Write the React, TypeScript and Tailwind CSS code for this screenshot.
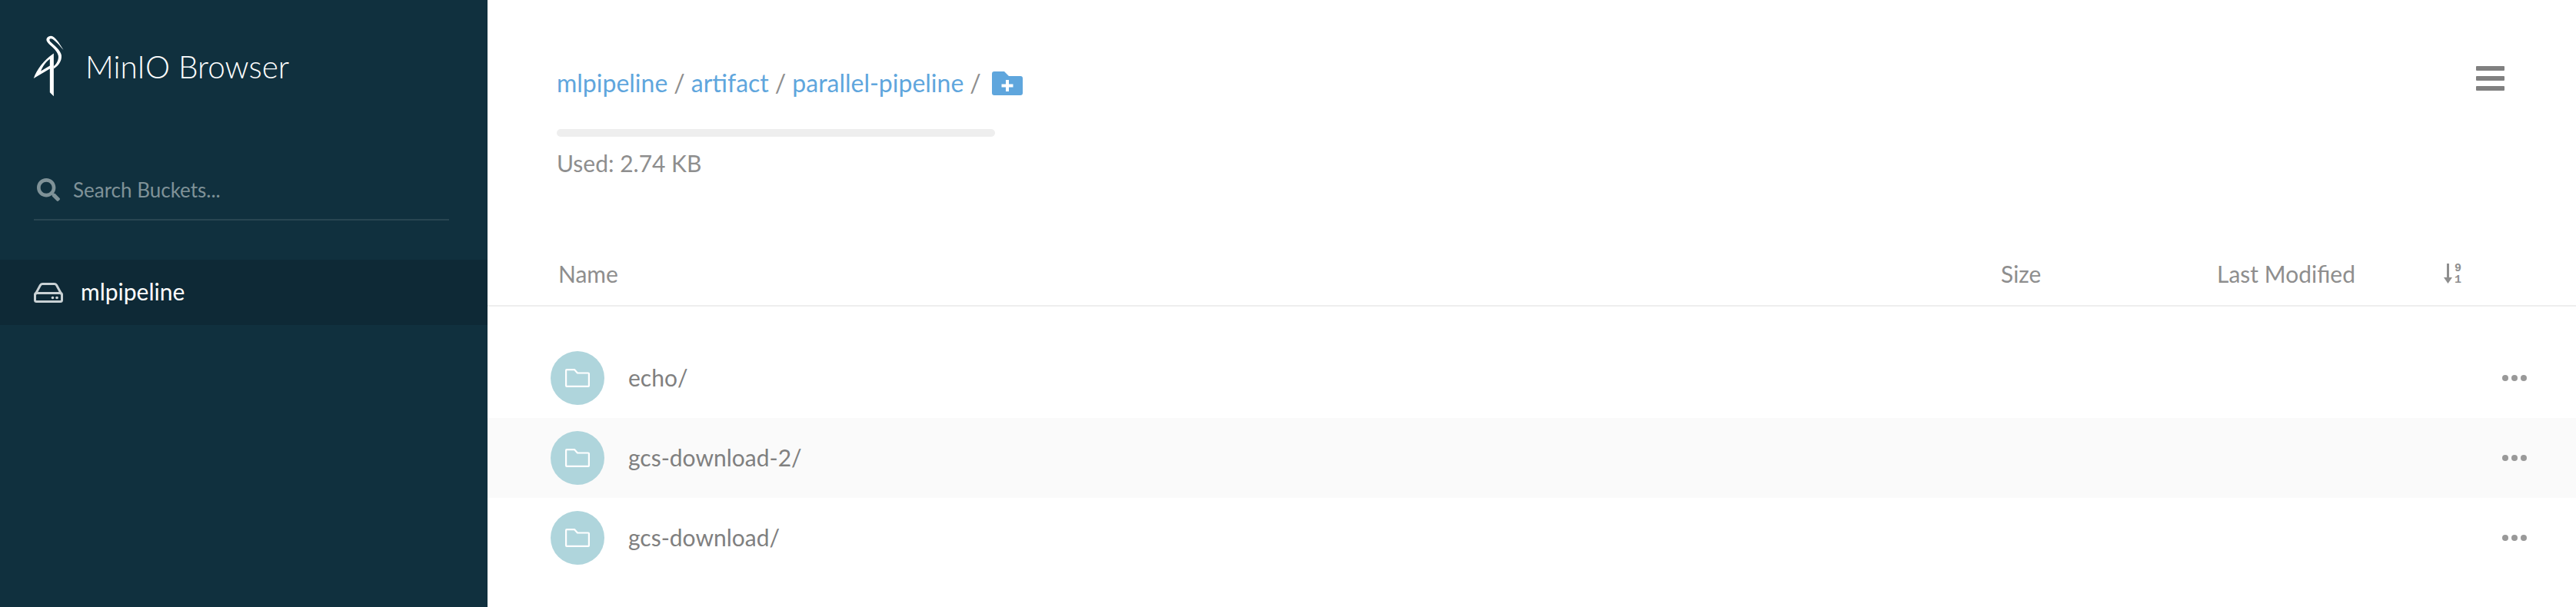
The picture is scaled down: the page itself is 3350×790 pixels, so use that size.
import { FaSearch } from 'react-icons/fa';

const ROWS = [
  { name: 'echo/', striped: false },
  { name: 'gcs-download-2/', striped: true },
  { name: 'gcs-download/', striped: false },
];

function Logo() {
  return (
    <svg viewBox="70 45 125 245" className="h-[82px] w-[42px] shrink-0" fill="#fff" fillRule="evenodd">
      <path d="M188 105 C170 75 155 52 140 50 C125 50 118 62 124 72 C130 85 165 105 168 128 C170 145 160 160 150 168 L150 178 C170 165 182 148 180 125 C176 105 150 85 136 72 C130 62 136 58 145 62 C158 70 175 90 188 105 Z" />
      <path d="M150 118 L150 285 L135 270 L135 178 L72 215 C85 180 110 145 150 118 Z M135 140 C120 150 108 168 100 187 L135 166 Z" />
    </svg>
  );
}

function DriveIcon() {
  return (
    <svg viewBox="0 0 38 26" className="h-[26px] w-[38px] shrink-0" fill="none" stroke="#c9d1d4" strokeWidth="3">
      <path d="M2 15 L8.5 3 Q9.5 1.5 11.5 1.5 H26.5 Q28.5 1.5 29.5 3 L36 15" />
      <rect x="1.5" y="13.5" width="35" height="11" rx="2" />
      <circle cx="24.5" cy="19.5" r="1.8" fill="#c9d1d4" stroke="none" />
      <circle cx="30" cy="19.5" r="1.8" fill="#c9d1d4" stroke="none" />
    </svg>
  );
}

function FolderPlus() {
  return (
    <svg viewBox="0 0 40 31" className="ml-[14px] h-[31px] w-[40px]">
      <path d="M0 3 Q0 0 3 0 H16 L22 6 H37 Q40 6 40 9 V28 Q40 31 37 31 H3 Q0 31 0 28 Z" fill="#5fa6dd" />
      <path d="M20 11 V26 M12.5 18.5 H27.5" stroke="#fff" strokeWidth="4" />
    </svg>
  );
}

function FolderOutline() {
  return (
    <svg viewBox="0 0 32 24" className="h-[24px] w-[32px]" fill="none" stroke="#fff" strokeWidth="2.2">
      <path d="M1.1 2 Q1.1 1.1 2 1.1 H12 L16 5.5 H30 Q30.9 5.5 30.9 6.4 V22 Q30.9 22.9 30 22.9 H2 Q1.1 22.9 1.1 22 Z" strokeLinejoin="round" />
    </svg>
  );
}

function SortIcon() {
  return (
    <svg viewBox="0 0 24 26" className="h-[26px] w-[24px] overflow-visible" fill="#8e8e8e">
      <path d="M4 0 H7 V18 H11 L5.5 26 L0 18 H4 Z" />
      <text x="14" y="10" fontSize="15" fontWeight="700" fontFamily="Liberation Mono, monospace">9</text>
      <text x="14" y="25" fontSize="15" fontWeight="700" fontFamily="Liberation Mono, monospace">1</text>
    </svg>
  );
}

export default function App() {
  return (
    <div className="flex h-[790px] w-[3350px] overflow-hidden bg-white font-['Lato',sans-serif]">
      <aside className="w-[634px] shrink-0 bg-[#10303e]">
        <div className="flex items-start pl-[43px] pt-[45px]">
          <Logo />
          <span className="ml-[26px] mt-[17px] text-[40.5px] leading-[50px] font-light text-white">MinIO Browser</span>
        </div>
        <div className="ml-[44px] mr-[50px] mt-[94px] flex h-[66px] items-center border-b-2 border-white/10 pb-[12px] pl-[4px]">
          <FaSearch className="h-[30px] w-[30px] text-[#7f9298]" />
          <span className="ml-[17px] text-[26px] text-[#7f9298]">Search Buckets...</span>
        </div>
        <div className="mt-[51px] flex h-[85px] items-center bg-[#0e2936] pl-[44px]">
          <DriveIcon />
          <span className="ml-[23px] mb-[2px] text-[30px] text-white">mlpipeline</span>
        </div>
      </aside>
      <main className="min-w-0 flex-1">
        <div className="flex items-start justify-between pl-[90px] pr-[93px]">
          <div>
            <div className="mt-[86px] flex h-[44px] items-center text-[32px] text-[#8e8e8e]">
              <span className="text-[#5fa6dd]">mlpipeline</span>
              <span className="mx-[8px]">/</span>
              <span className="text-[#5fa6dd]">artifact</span>
              <span className="mx-[8px]">/</span>
              <span className="text-[#5fa6dd]">parallel-pipeline</span>
              <span className="ml-[8px]">/</span>
              <FolderPlus />
            </div>
            <div className="mt-[38px] h-[10px] w-[570px] rounded-[5px] bg-[#eeeeee]" />
            <p className="mt-[14px] text-[30px] leading-[40px] text-[#8e8e8e]">Used: 2.74 KB</p>
          </div>
          <div className="mt-[86px] flex w-[37px] flex-col gap-[7px]">
            <span className="h-[6px] rounded-[1px] bg-[#808080]" />
            <span className="h-[6px] rounded-[1px] bg-[#808080]" />
            <span className="h-[6px] rounded-[1px] bg-[#808080]" />
          </div>
        </div>
        <div className="mt-[102px] flex h-[65px] items-center border-b-2 border-[#eeeeee] pb-[19px] pl-[92px] text-[30px] text-[#8e8e8e]">
          <span className="w-[1876px]">Name</span>
          <span className="w-[281px]">Size</span>
          <span className="w-[295px]">Last Modified</span>
          <SortIcon />
        </div>
        <div className="mt-[41px]">
          {ROWS.map((r) => (
            <div key={r.name} className={`flex h-[104px] items-center pl-[82px] pr-[64px] ${r.striped ? 'bg-[#fafafa]' : ''}`}>
              <div className="flex h-[70px] w-[70px] items-center justify-center rounded-full bg-[#afd5dc]">
                <FolderOutline />
              </div>
              <span className="ml-[31px] mb-[2px] flex-1 text-[30px] text-[#808080]">{r.name}</span>
              <div className="flex gap-[4px]">
                <span className="h-[8px] w-[8px] rounded-full bg-[#999999]" />
                <span className="h-[8px] w-[8px] rounded-full bg-[#999999]" />
                <span className="h-[8px] w-[8px] rounded-full bg-[#999999]" />
              </div>
            </div>
          ))}
        </div>
      </main>
    </div>
  );
}
